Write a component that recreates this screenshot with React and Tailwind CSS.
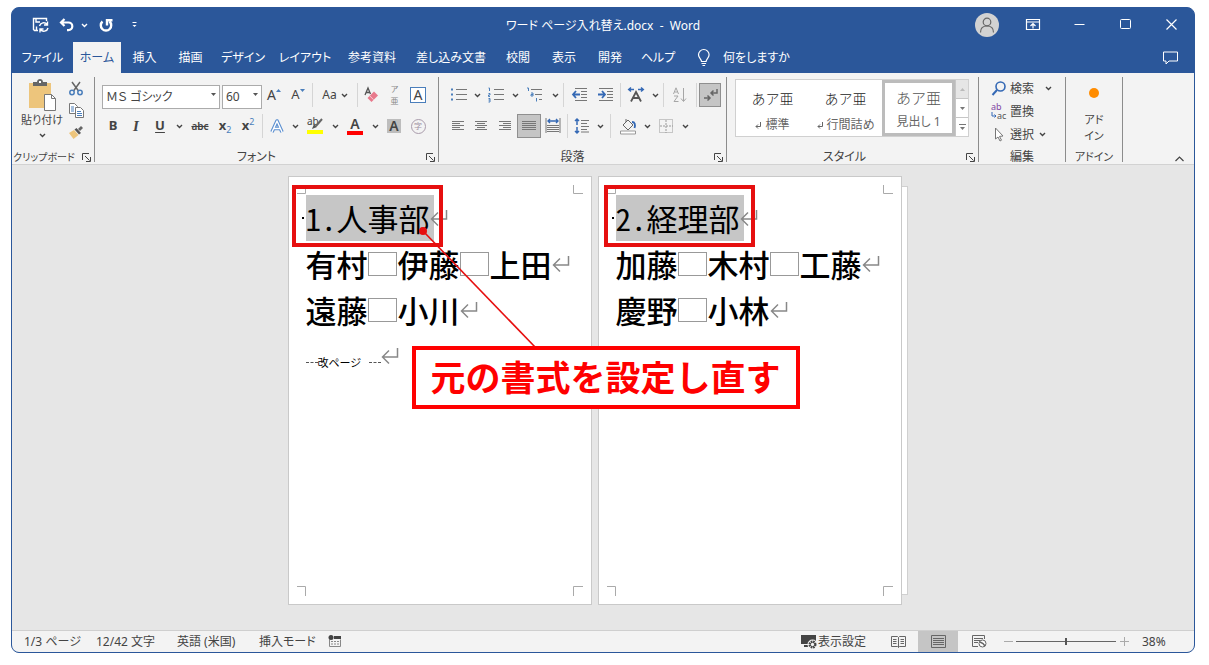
import React, { useState } from 'react';
import clsx from 'clsx';

const TABS = [
  { label: 'ファイル', width: 'w-[61px]' },
  { label: 'ホーム', width: 'w-12' },
  { label: '挿入', width: 'w-[47px]' },
  { label: '描画', width: 'w-[45px]' },
  { label: 'デザイン', width: 'w-[60px]' },
  { label: 'レイアウト', width: 'w-16' },
  { label: '参考資料', width: 'w-[70px]' },
  { label: '差し込み文書', width: 'w-[88px]' },
  { label: '校閲', width: 'w-[46px]' },
  { label: '表示', width: 'w-[46px]' },
  { label: '開発', width: 'w-[46px]' },
  { label: 'ヘルプ', width: 'w-[50px]' },
];

const Svg = ({ w = 16, h = 16, children, ...rest }) => (
  <svg width={w} height={h} viewBox={`0 0 ${w} ${h}`} fill="none" stroke="currentColor" className="shrink-0 overflow-visible" aria-hidden="true" {...rest}>
    {children}
  </svg>
);

const Chevron = () => (
  <Svg w={7} h={5} strokeWidth="1.4"><path d="M1 1l2.5 2.5L6 1" /></Svg>
);

const Tool = ({ label, width = 'w-6', height = 'h-6', active, children }) => (
  <button
    type="button"
    aria-label={label}
    className={clsx('flex shrink-0 items-center justify-center', height, width, active && 'border border-[#8f8f8f] bg-[#c5c5c5]')}
  >
    {children}
  </button>
);

const Drop = ({ label, width = 'w-3' }) => (
  <Tool label={label} width={width}><Chevron /></Tool>
);

const Sep = ({ wide }) => <span className={clsx('h-6 w-px shrink-0 bg-[#d5d5d5]', wide ? 'mx-1' : 'mx-0.5')} />;

const Launcher = ({ label }) => (
  <button type="button" aria-label={label} className="absolute right-[3px] bottom-0">
    <Svg w={9} h={9}><path d="M.5 7V.5H7M3 3l4.5 4.5M8.5 4v4.5H4" /></Svg>
  </button>
);

const Group = ({ title, width, launcher, labelClass = 'text-xs', children }) => (
  <section aria-label={title} className={clsx('relative flex shrink-0 flex-col justify-between border-r border-[#8c8c8c]', width)}>
    {children}
    <div className={clsx('pt-0.5 text-center leading-[10px] whitespace-nowrap', labelClass)}>{title}</div>
    {launcher && <Launcher label={`${title}の設定`} />}
  </section>
);

const Combo = ({ label, width, value }) => (
  <div className={clsx('relative h-6 shrink-0', width)}>
    <select
      aria-label={label}
      defaultValue={value}
      className="h-6 w-full appearance-none border border-[#ababab] bg-white pl-[3px] text-xs leading-5 outline-none"
    >
      <option>{value}</option>
    </select>
    <svg width="5" height="3" viewBox="0 0 5 3" className="pointer-events-none absolute top-2.5 right-1 fill-[#555]" aria-hidden="true">
      <path d="M0 0h5L2.5 3z" />
    </svg>
  </div>
);

/* title bar */

const TitleBar = () => (
  <header className="grid h-[34px] grid-cols-[1fr_auto_1fr] items-center text-white">
    <div className="flex items-center pl-4">
      <Tool label="上書き保存">
        <Svg w={17} h={16} strokeWidth="1.4">
          <path d="M6 13.5H2.5l-1-1v-11h13V4M4 1.5V5h4M4.5 13V9.5" />
          <path d="M7.5 9a4.2 4.2 0 0 1 7.5-1.5M15.5 4.500v3.500H12M16 11a4.200 4.200 0 0 1-7.500 1.500M8 15.500V12h3.500" />
        </Svg>
      </Tool>
      <Tool label="元に戻す" width="w-7">
        <Svg w={15} h={14} strokeWidth="2.2"><path d="M5.500 1L2 4.500 5.500 8M2 4.500h7.500a3.800 3.800 0 0 1 0 7.600H8" /></Svg>
      </Tool>
      <Drop label="元に戻すの一覧" width="w-2" />
      <Tool label="繰り返し" width="w-9">
        <Svg w={14} h={15} strokeWidth="2.4"><path d="M3.500 3.500a5.200 5.200 0 1 0 7 0M8 7.500V2.200h5.500" /></Svg>
      </Tool>
      <Tool label="クイック アクセスのカスタマイズ" width="w-5">
        <Svg w={7} h={6}><path d="M1.500.5h4" /><path d="M1.500 3h4l-2 2z" fill="currentColor" stroke="none" /></Svg>
      </Tool>
    </div>
    <h1 className="pt-0.5 text-xs whitespace-pre">ワード ページ入れ替え.docx  -  Word</h1>
    <div className="flex items-center justify-end">
      <Tool label="アカウント" width="w-[46px]">
        <span className="flex size-6 shrink-0 items-center justify-center rounded-full bg-[#d2d2d2] text-[#666]">
          <Svg w={16} h={16} strokeWidth="1.2"><circle cx="8" cy="5" r="3.800" /><path d="M1.500 15.500c0-4 2.500-6.500 6.500-6.500s6.500 2.500 6.500 6.500" /></Svg>
        </span>
      </Tool>
      <Tool label="リボンの表示オプション" width="w-[46px]">
        <Svg w={14} h={12}><path d="M.5.5h13v10H.5zM.5 3h13M7 9.500V5M4.500 7L7 4.500 9.500 7" strokeWidth="1.2" /></Svg>
      </Tool>
      <Tool label="最小化" width="w-[46px]"><Svg w={11} h={12}><path d="M.5 5.500h10" /></Svg></Tool>
      <Tool label="最大化" width="w-[46px]"><Svg w={11} h={12}><rect x=".5" y=".5" width="10" height="9" rx="1" /></Svg></Tool>
      <Tool label="閉じる" width="w-[46px]"><Svg w={11} h={12} strokeWidth="1.2"><path d="M.5.5l10 10M10.500.5l-10 10" /></Svg></Tool>
    </div>
  </header>
);

const TabBar = () => {
  const [current, setCurrent] = useState('ホーム');

  return (
    <nav className="flex h-[31px] text-xs text-white">
      {TABS.map(({ label, width }) => (
        <button
          key={label}
          type="button"
          onClick={() => setCurrent(label)}
          className={clsx('shrink-0 whitespace-nowrap', width, label === current && 'bg-[#f3f3f3] text-[#2b579a]')}
        >
          {label}
        </button>
      ))}
      <button type="button" className="ml-3.5 flex shrink-0 items-center gap-3 whitespace-nowrap">
        <Svg w={14} h={18}>
          <path d="M4.500 12.500C4.500 10 1.500 9 1.500 5.800a5.300 5.300 0 0 1 10.600 0C12.100 9 9.100 10 9.100 12.500zM4.500 14.500h4.600M5.500 16.500h2.600" strokeWidth="1.2" />
        </Svg>
        何をしますか
      </button>
      <button type="button" aria-label="コメント" className="ml-auto pr-4">
        <Svg w={15} h={14}><path d="M.5 1h14v9H6l-3 3v-3H.5z" /></Svg>
      </button>
    </nav>
  );
};

/* ribbon */

const ClipboardGroup = () => (
  <Group title="クリップボード" width="w-[83px]" launcher labelClass="pr-[18px] text-[10px]">
    <div className="flex pl-2">
      <button type="button" className="flex w-11 flex-col items-center pt-0.5 text-[11px] leading-[18px] whitespace-nowrap">
        <Svg w={30} h={32} stroke="none">
          <rect x="2" y="4" width="22" height="25" fill="#edc57c" />
          <path d="M6 3h4c0-4 6-4 6 0h4v4H6z" fill="#666" />
          <rect x="12" y="2" width="2" height="2" fill="#fff" />
          <path d="M17.500 15.500h7l4 4v12h-11z" fill="#fff" stroke="#777" />
          <path d="M24.500 15.500v4h4" stroke="#777" />
        </Svg>
        貼り付け
        <span className="flex h-3 items-center"><Chevron /></span>
      </button>
      <div className="ml-0.5 flex flex-col">
        <Tool label="切り取り" width="w-5" height="h-[22px]">
          <Svg w={14} h={15} strokeWidth="1.5">
            <path d="M3 1l6.500 9M11 1L4.500 10" stroke="#666" />
            <circle cx="3" cy="11.500" r="2.200" stroke="#4a7ebb" /><circle cx="11" cy="11.500" r="2.200" stroke="#4a7ebb" />
          </Svg>
        </Tool>
        <Tool label="コピー" width="w-5" height="h-[22px]">
          <Svg w={15} h={15} stroke="#777">
            <path d="M.5.5h5l3 3v7h-8z" fill="#fff" /><path d="M6.500 4.500h5l3 3v7h-8z" fill="#fff" />
            <path d="M2 4h3M2 6h3M2 8h3M8 8.500h4M8 10.500h5M8 12.500h5" stroke="#4a7ebb" />
          </Svg>
        </Tool>
        <Tool label="書式のコピー/貼り付け" width="w-5" height="h-[22px]">
          <Svg w={15} h={14} stroke="none">
            <path d="M0 8l5-3 4.500 5-5 4z" fill="#edc57c" /><path d="M5.500 4.500l2-1.500 4.500 5-2 1.500z" fill="#555" /><path d="M9 4l3-3 2 2-3 3z" fill="#666" />
          </Svg>
        </Tool>
      </div>
    </div>
  </Group>
);

const FontGroup = () => (
  <Group title="フォント" width="w-[344px]" launcher labelClass="pr-5 text-xs">
    <div className="flex flex-col gap-[7px] pt-1.5 pl-[7px]">
      <div className="flex items-center">
        <div className="flex gap-0.5">
          <Combo label="フォント名" width="w-[118px]" value="ＭＳ ゴシック" />
          <Combo label="フォント サイズ" width="w-10" value="60" />
        </div>
        <Tool label="フォント サイズの拡大">
          <span className="text-sm">A</span>
          <Svg w={5} h={12}><path d="M0 3h5L2.500 0z" fill="#4a7ebb" stroke="none" /></Svg>
        </Tool>
        <Tool label="フォント サイズの縮小">
          <span className="text-[13px]">A</span>
          <Svg w={5} h={12}><path d="M0 0h5L2.500 3z" fill="#4a7ebb" stroke="none" /></Svg>
        </Tool>
        <Sep />
        <Tool label="文字種の変換" width="w-10">
          <span className="mr-1 text-xs">Aa</span><Chevron />
        </Tool>
        <Sep />
        <Tool label="すべての書式をクリア" width="w-[23px]">
          <Svg w={15} h={16}>
            <path d="M1 8l3-7 2.500 6M2.500 5.500h3" stroke="#555" strokeWidth="1.3" />
            <path d="M10 4.500l4 4-6.500 6.500-4-4z" fill="#e8798c" stroke="none" />
            <path d="M5.500 8.700l4 4" stroke="#f8cdd4" />
          </Svg>
        </Tool>
        <Tool label="ルビ" width="w-[23px]">
          <span className="flex flex-col text-[8px] leading-3 text-[#888]"><span>ア</span><span>亜</span></span>
        </Tool>
        <Tool label="囲み線">
          <span className="flex size-4 items-center justify-center border border-[#4a7ebb] bg-white text-sm leading-4">A</span>
        </Tool>
      </div>
      <div className="flex items-center">
        <Tool label="太字" width="w-[22px]"><b className="text-[13px]">B</b></Tool>
        <Tool label="斜体"><i className="font-['Liberation_Serif',serif] text-[15px] font-bold">I</i></Tool>
        <Tool label="下線"><b className="text-[13px] underline underline-offset-2">U</b></Tool>
        <Drop label="下線の種類" width="w-3.5" />
        <Tool label="取り消し線" width="w-7"><span className="text-[10px] font-semibold line-through">abc</span></Tool>
        <Tool label="下付き" width="w-[22px]"><b className="text-[13px]">x</b><span className="pt-2 text-[9px] text-[#4a7ebb]">2</span></Tool>
        <Tool label="上付き"><b className="text-[13px]">x</b><span className="pb-2 text-[9px] text-[#4a7ebb]">2</span></Tool>
        <Sep />
        <Tool label="文字の効果と体裁">
          <Svg w={14} h={15} strokeLinejoin="round">
            <path d="M2 13L7 2l5 11M4 9.500h6" stroke="#5b8fd0" strokeWidth="3.6" /><path d="M2 13L7 2l5 11M4 9.500h6" stroke="#fff" strokeWidth="1.4" />
          </Svg>
        </Tool>
        <Drop label="文字の効果の一覧" />
        <Tool label="蛍光ペンの色" width="w-7">
          <Svg w={17} h={18}>
            <path d="M0 13h16v4H0z" fill="#ffff00" stroke="none" />
            <text x="0" y="8" fontSize="10" fill="#444" stroke="none">ab</text>
            <path d="M15 2L9 9" strokeWidth="2" stroke="#666" /><path d="M7 7l3 3-5 2z" fill="#555" stroke="none" />
          </Svg>
        </Tool>
        <Drop label="蛍光ペンの色の一覧" />
        <Tool label="フォントの色" width="w-7">
          <span className="flex w-4 flex-col items-center text-sm leading-3 font-semibold">A<span className="mt-px h-1 w-4 bg-[#f00]" /></span>
        </Tool>
        <Drop label="フォントの色の一覧" />
        <Tool label="文字の網かけ" width="w-[26px]">
          <span className="flex h-3.5 w-3.5 items-center justify-center bg-[#bdbdbd] text-sm leading-3 font-semibold">A</span>
        </Tool>
        <Tool label="囲い文字" width="w-[22px]">
          <span className="flex size-[15px] items-center justify-center rounded-full border border-[#a99bab] text-[8px] leading-3 text-[#a08fa3]">字</span>
        </Tool>
      </div>
    </div>
  </Group>
);

const Lines = ({ d, children }) => (
  <Svg w={16} h={16}>
    <path d={d} stroke="#777" />
    {children}
  </Svg>
);

const ParagraphGroup = () => (
  <Group title="段落" width="w-[288px]" launcher labelClass="pr-5 text-xs">
    <div className="flex flex-col gap-[7px] pt-1.5 pl-2">
      <div className="flex items-center">
        <Tool label="箇条書き">
          <Lines d="M5 2.500h11M5 7.500h11M5 12.500h11"><path d="M0 2.500h2M0 7.500h2M0 12.500h2" stroke="#4a7ebb" strokeWidth="2" /></Lines>
        </Tool>
        <Drop label="箇条書きの一覧" />
        <Tool label="段落番号" width="w-[26px]">
          <Lines d="M6 2.500h10M6 7.500h10M6 12.500h10">
            <path d="M.5 1h1v3M.5 6.500h1.500v1.500H.5v1.500H2M.5 11.500h1.500v1.500H.5M2 13v2H.5" stroke="#4a7ebb" />
          </Lines>
        </Tool>
        <Drop label="段落番号の一覧" />
        <Tool label="アウトライン" width="w-7">
          <Lines d="M4 2.500h11M8 7.500h7M12 12.500h3">
            <path d="M0 1h1.500v3M4 6h2v3H4V7.500h2M9.500 11v3.500" stroke="#4a7ebb" />
          </Lines>
        </Tool>
        <Drop label="アウトラインの一覧" />
        <Sep />
        <Tool label="インデントを減らす" width="w-7">
          <Lines d="M3 1.500h12M9 4.500h6M9 7.500h6M9 10.500h6M3 13.500h12"><path d="M4 4L1 7.500 4 11M1 7.500h7" stroke="#3569b5" strokeWidth="1.8" /></Lines>
        </Tool>
        <Tool label="インデントを増やす">
          <Lines d="M1 1.500h14M9 4.500h6M9 7.500h6M9 10.500h6M1 13.500h14"><path d="M4 4l3 3.500L4 11M0 7.500h7" stroke="#3569b5" strokeWidth="1.8" /></Lines>
        </Tool>
        <Sep />
        <Tool label="拡張書式" width="w-[26px]">
          <Svg w={16} h={16}>
            <path d="M3 14.500L8 5l5 9.500M5 11h6" stroke="#555" strokeWidth="1.8" />
            <path d="M3 .5l-2.300 2L3 4.500M1 2.500h5M13 .5l2.300 2L13 4.500M15 2.500h-5" stroke="#3569b5" strokeWidth="1.5" />
          </Svg>
        </Tool>
        <Drop label="拡張書式の一覧" />
        <Sep />
        <Tool label="並べ替え" width="w-7">
          <Svg w={14} h={16} stroke="#a6a6a6">
            <path d="M.5 7L3 .8 5.500 7M1.500 5h3M1 9h4l-4 5.500h4.500M10.500 1v13M8 11.500l2.500 3 2.500-3" />
          </Svg>
        </Tool>
        <Sep />
        <Tool label="編集記号の表示/非表示" width="w-[22px]" active>
          <Svg w={15} h={14} stroke="#666" strokeWidth="1.5"><path d="M1 10h6M4.500 7.500L7 10l-2.500 2.500M14 1v4H8M10.500 2.500L8 5l2.500 2.500" /></Svg>
        </Tool>
      </div>
      <div className="flex items-center">
        <Tool label="左揃え" width="w-[22px]"><Lines d="M2 3.500h12M2 5.500h8M2 7.500h12M2 9.500h8M2 11.500h12" /></Tool>
        <Tool label="中央揃え"><Lines d="M2 3.500h12M4 5.500h8M2 7.500h12M4 9.500h8M2 11.500h12" /></Tool>
        <Tool label="右揃え"><Lines d="M2 3.500h12M6 5.500h8M2 7.500h12M6 9.500h8M2 11.500h12" /></Tool>
        <Tool label="両端揃え" active><Lines d="M1 3.500h14M1 5.500h14M1 7.500h14M1 9.500h14M1 11.500h14" /></Tool>
        <Tool label="均等割り付け">
          <Lines d="M2 7.500h12M2 9.500h12M2 11.500h12M2 13.500h12M1 0v15M15 0v15"><path d="M3 3h10M5 1L3 3l2 2M11 1l2 2-2 2" stroke="#3569b5" strokeWidth="1.4" /></Lines>
        </Tool>
        <Sep />
        <Tool label="行と段落の間隔">
          <Lines d="M7 2.500h8M7 5.500h6M7 8.500h8M7 11.500h6M7 14h8"><path d="M3 1v6M1 3l2-2 2 2M3 9v6M1 13l2 2 2-2" stroke="#3569b5" strokeWidth="1.5" /></Lines>
        </Tool>
        <Drop label="間隔の一覧" />
        <Sep wide />
        <Tool label="塗りつぶし" width="w-[26px]">
          <Svg w={16} h={17}>
            <path d="M3 7l5-5 5 5-5 5zM6 4V1" stroke="#666" /><path d="M12 4c3 0 3.500 3 2.500 6" stroke="#3569b5" strokeWidth="1.8" /><path d="M.5 13h15v3H.5z" stroke="#999" fill="#fff" />
          </Svg>
        </Tool>
        <Drop label="塗りつぶしの一覧" />
        <Tool label="罫線" width="w-[26px]">
          <Svg w={15} h={15} stroke="#999"><path d="M.5.5h13v13H.5z" strokeDasharray="1 1" /><path d="M7 1v13M1 7h13" strokeDasharray="2 1" /></Svg>
        </Tool>
        <Drop label="罫線の一覧" />
      </div>
    </div>
  </Group>
);

const StyleCell = ({ mark, name, selected }) => (
  <button
    type="button"
    className={clsx(
      'flex w-[73px] flex-col items-center justify-center gap-2 text-xs leading-4 whitespace-nowrap text-[#666]',
      selected ? 'border-[3px] border-[#bcbcbc] pt-1' : 'pt-1.5'
    )}
  >
    <span className={clsx('font-light [font-feature-settings:normal]', selected ? 'text-[15px] text-[#555]' : 'text-sm text-[#222]')}>あア亜</span>
    <span className="flex items-center gap-1">
      {mark && <Svg w={6} h={7}><path d="M5.500 0v4.500H1M3 2.500l-2 2 2 2" /></Svg>}
      {name}
    </span>
  </button>
);

const StyleGroup = () => (
  <Group title="スタイル" width="w-[252px]" launcher labelClass="pr-4 text-xs">
    <div className="flex pt-0.5 pl-2">
      <div className="flex h-[58px] border border-[#d0d0d0] bg-white">
        <StyleCell mark name="標準" />
        <StyleCell mark name="行間詰め" />
        <StyleCell name="見出し 1" selected />
        <div className="flex w-[13px] flex-col divide-y divide-[#c6c6c6] border-l border-[#c6c6c6]">
          <button type="button" aria-label="前の行" className="flex flex-1 items-center justify-center bg-[#e6e6e6]">
            <Svg w={5} h={3} stroke="none"><path d="M0 3h5L2.500 0z" fill="#bbb" /></Svg>
          </button>
          <button type="button" aria-label="次の行" className="flex flex-1 items-center justify-center">
            <Svg w={5} h={3} stroke="none"><path d="M0 0h5L2.500 3z" fill="#777" /></Svg>
          </button>
          <button type="button" aria-label="その他" className="flex flex-1 items-center justify-center">
            <Svg w={7} h={6}><path d="M0 .5h7" stroke="#777" /><path d="M1 3h5L3.500 6z" fill="#777" stroke="none" /></Svg>
          </button>
        </div>
      </div>
    </div>
  </Group>
);

const EditGroup = () => (
  <Group title="編集" width="w-[87px]">
    <div className="flex flex-col pl-3 text-xs">
      <button type="button" className="flex h-[23px] items-center gap-[3px]">
        <Svg w={16} h={15} stroke="#3569b5" strokeWidth="1.6"><circle cx="9.500" cy="5.500" r="4.500" /><path d="M6 9l-4.500 5" strokeWidth="2" /></Svg>
        検索<span className="ml-2"><Chevron /></span>
      </button>
      <button type="button" className="flex h-[23px] items-center gap-[3px]">
        <Svg w={16} h={18} stroke="none">
          <text x="0" y="7" fontSize="9" fill="#8147a3">ab</text>
          <text x="6" y="16" fontSize="9" fill="#555">ac</text>
          <path d="M1 9v4h4M3.500 11.500L5 13l-1.500 1.500" stroke="#3569b5" />
        </Svg>
        置換
      </button>
      <button type="button" className="flex h-[23px] items-center gap-[3px]">
        <Svg w={16} h={15} stroke="#777"><path d="M4.500 1v11l2.500-2 2 4 1.500-.8-2-3.800 3.500-.4z" fill="#fff" /></Svg>
        選択<span className="ml-0.5"><Chevron /></span>
      </button>
    </div>
  </Group>
);

const Ribbon = () => (
  <div className="flex h-[92px] items-stretch border-b border-[#d2d2d2] bg-[#f3f3f3] pt-1 pb-0.5">
    <ClipboardGroup />
    <FontGroup />
    <ParagraphGroup />
    <StyleGroup />
    <EditGroup />
    <Group title="アドイン" width="w-[57px]" labelClass="text-[11px]">
      <button type="button" className="flex flex-col items-center pt-[11px] text-[11px] leading-4">
        <span className="mb-3.5 size-2.5 rounded-full bg-[#ff8c00]" />
        <span>アド</span>
        <span>イン</span>
      </button>
    </Group>
    <button type="button" aria-label="リボンを折りたたむ" className="ml-auto self-end pr-2.5">
      <Svg w={9} h={6} strokeWidth="1.2"><path d="M.5 5l4-4 4 4" /></Svg>
    </button>
  </div>
);

/* document */

const ReturnMark = () => (
  <svg width="18" height="18" viewBox="0 0 18 18" fill="none" stroke="#888" strokeWidth="1.5" className="shrink-0" aria-hidden="true">
    <path d="M16.500 1v9H1.500M8 3.500L1.500 10 8 16.500" />
  </svg>
);

const WideSpace = () => <span className="mr-px h-6 w-[29px] shrink-0 border border-[#999]" />;

const CornerMarks = ({ bottom }) => (
  <div className="flex justify-between text-[#aaa]">
    {bottom ? (
      <>
        <Svg w={10} h={10}><path d="M0 .5h8.500V10" /></Svg>
        <Svg w={10} h={10}><path d="M10 .5H.5V10" /></Svg>
      </>
    ) : (
      <>
        <Svg w={10} h={10}><path d="M8.500 0v8.500H0" /></Svg>
        <Svg w={10} h={10}><path d="M.5 0v8.500H10" /></Svg>
      </>
    )}
  </div>
);

const Page = ({ heading, lines, pageBreak }) => (
  <article className="z-10 flex w-[304px] shrink-0 flex-col border border-[#c9c9c9] bg-white px-2 pt-2 pb-1 font-['Noto_Sans_CJK_JP',sans-serif] text-[31px] text-black [font-feature-settings:'hwid']">
    <CornerMarks />
    <div className="flex h-[46px] items-center">
      <span className="mr-0.5 ml-[5px] size-0.5 bg-black" />
      <h2 className="flex h-[46px] items-center bg-[#c6c6c6] pr-1 leading-[46px] whitespace-nowrap">{heading}</h2>
      <span className="-ml-1"><ReturnMark /></span>
    </div>
    {lines.map((words) => (
      <p key={words[0]} className="flex h-[46px] items-center pl-[9px] leading-[46px] font-medium whitespace-nowrap">
        {words.map((word, i) => (
          <React.Fragment key={word}>
            {i > 0 && <WideSpace />}
            {word}
          </React.Fragment>
        ))}
        <ReturnMark />
      </p>
    ))}
    {pageBreak && (
      <p className="flex h-[46px] items-center pl-[9px] text-[11px] [font-feature-settings:'palt']">
        <span className="mt-3 w-3 border-t border-dashed border-[#555]" />
        <span className="mt-3 mr-2">改ページ</span>
        <span className="mt-3 w-3 border-t border-dashed border-[#555]" />
        <ReturnMark />
      </p>
    )}
    <div className="mt-auto mb-1"><CornerMarks bottom /></div>
  </article>
);

const Annotations = () => (
  <div className="pointer-events-none absolute inset-0 z-20">
    <div className="absolute top-[9px] left-1 h-[62px] w-[151px] border-4 border-[#e60f0f]" />
    <div className="absolute top-[9px] left-[316px] h-[62px] w-[151px] border-4 border-[#e60f0f]" />
    <svg width="260" height="180" viewBox="0 0 260 180" className="absolute top-0 left-0" aria-hidden="true">
      <path d="M135 55L248 172" stroke="#e60f0f" strokeWidth="1.6" />
      <circle cx="135" cy="55" r="4" fill="#e60f0f" />
    </svg>
    <div className="absolute top-[170px] left-[124px] flex h-[63px] w-[388px] items-center justify-center border-4 border-[#f00] bg-white pb-0.5 font-['Noto_Sans_CJK_JP',sans-serif] text-[35px] font-bold whitespace-nowrap text-[#f00] [font-feature-settings:normal]">
      元の書式を設定し直す
    </div>
  </div>
);

const Workspace = () => (
  <main className="flex flex-1 justify-center bg-[#e6e6e6] pt-[11px] pr-[17px] pb-[25px]">
    <div className="relative flex gap-1.5">
      <Page heading="1.人事部" lines={[['有村', '伊藤', '上田'], ['遠藤', '小川']]} pageBreak />
      <Page heading="2.経理部" lines={[['加藤', '木村', '工藤'], ['慶野', '小林']]} />
      {/* edge of the third page */}
      <div className="absolute top-2.5 -right-1.5 bottom-2.5 w-3 border border-[#d0d0d0] bg-white" />
      <Annotations />
    </div>
  </main>
);

/* status bar */

const StatusBar = () => {
  const [zoom, setZoom] = useState(38);

  return (
    <footer className="flex h-[22px] items-center border-t border-[#cfcfcf] bg-[#f3f3f3] pl-3 text-xs whitespace-nowrap">
      <span className="w-[72px]">1/3 ページ</span>
      <span className="w-[81px]">12/42 文字</span>
      <span className="w-[82px]">英語 (米国)</span>
      <span className="w-[69px]">挿入モード</span>
      <Svg w={13} h={13}>
        <path d="M1.500 4.500v7h11v-7" stroke="#888" /><path d="M6 1h7v3H6z" fill="currentColor" stroke="none" /><circle cx="3" cy="2.500" r="2.500" fill="currentColor" stroke="none" />
        <path d="M3 6.500h8M3 9h8" strokeDasharray="2 1" stroke="#888" />
      </Svg>
      <div className="ml-auto flex h-full items-center">
        <button type="button" className="mr-3 flex items-center">
          <Svg w={17} h={16} stroke="none">
            <path d="M0 1h15v9H0zM3 11h5v2H3z" fill="#444" />
            <circle cx="11.500" cy="10.500" r="5" fill="#f3f3f3" /><circle cx="11.500" cy="10.500" r="3" stroke="#444" strokeWidth="2" strokeDasharray="1.6 .8" />
            <circle cx="11.500" cy="10.500" r="2.200" stroke="#444" />
          </Svg>
          表示設定
        </button>
        <Tool label="閲覧モード" width="w-10">
          <Svg w={15} h={12} stroke="#666"><path d="M.5.5h6l1 1 1-1h6v10h-6l-1 1-1-1h-6zM7.500 1.500v10M2 3.500h3.500M2 5.500h3.500M2 7.500h3.500M9.500 3.500H13M9.500 5.500H13M9.500 7.500H13" /></Svg>
        </Tool>
        <button type="button" aria-label="印刷レイアウト" className="flex h-full w-10 items-center justify-center bg-[#c5c5c5]">
          <Svg w={15} h={13} stroke="#666"><path d="M.5.5h14v12H.5zM2 3.500h11M2 5.500h11M2 7.500h11M2 9.500h11" /></Svg>
        </button>
        <Tool label="Web レイアウト" width="w-[42px]">
          <Svg w={15} h={13} stroke="#666"><path d="M6 11.500H.5V.5h12V4M2 3.500h9M2 5.500h6M2 7.500h4" /><circle cx="10.500" cy="8.500" r="3.500" fill="#fff" /><path d="M8 7l3 1.500 2 2.500" strokeWidth="1.5" /></Svg>
        </Tool>
        <button type="button" aria-label="縮小" className="flex w-4 justify-center text-[#aaa]"><Svg w={9} h={9}><path d="M0 4.500h9" /></Svg></button>
        <input
          type="range"
          aria-label="ズーム"
          min="10"
          max="66"
          value={zoom}
          onChange={(e) => setZoom(Number(e.target.value))}
          className="h-2 w-[100px] appearance-none bg-transparent [&::-webkit-slider-runnable-track]:h-px [&::-webkit-slider-runnable-track]:bg-[#666] [&::-webkit-slider-thumb]:-mt-[3px] [&::-webkit-slider-thumb]:h-[7px] [&::-webkit-slider-thumb]:w-0.5 [&::-webkit-slider-thumb]:appearance-none [&::-webkit-slider-thumb]:bg-[#555]"
        />
        <button type="button" aria-label="拡大" className="flex w-4 justify-center text-[#aaa]"><Svg w={9} h={9}><path d="M0 4.500h9M4.500 0v9" /></Svg></button>
        <span className="w-[62px] pl-2.5">{zoom}%</span>
      </div>
    </footer>
  );
};

export default function App() {
  return (
    <div className="flex min-h-screen bg-white pt-[7px] pr-3.5 pb-3 pl-[11px] font-['Noto_Sans','Noto_Sans_CJK_JP',sans-serif] text-[#444] [font-feature-settings:'palt']">
      <div className="flex min-w-0 flex-1 flex-col overflow-hidden rounded-lg border border-[#2b579a] bg-[#2b579a]">
        <TitleBar />
        <TabBar />
        <Ribbon />
        <Workspace />
        <StatusBar />
      </div>
    </div>
  );
}
